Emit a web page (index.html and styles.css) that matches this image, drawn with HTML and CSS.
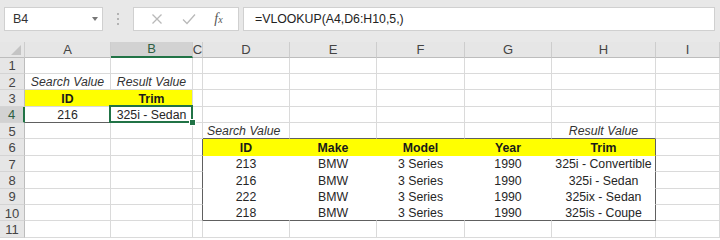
FILE: index.html
```html
<!DOCTYPE html>
<html lang="en">
<head>
  <meta charset="UTF-8">
  <title>VLOOKUP example</title>
  <link rel="stylesheet" href="styles.css">
</head>
<body>
  <div class="toolbar">
    <div class="name-box">
      <span>B4</span>
      <span class="name-arrow"></span>
    </div>
    <div class="grip"><i></i><i></i><i></i></div>
    <div class="fx-box">
      <svg class="tool-icon" width="12" height="12" viewBox="0 0 12 12">
        <path d="M1.5 1.5 L10.5 10.5 M10.5 1.5 L1.5 10.5" stroke="#b9b9b9" stroke-width="1.3" fill="none"/>
      </svg>
      <svg class="tool-icon" width="14" height="12" viewBox="0 0 14 12">
        <path d="M1 6.5 L5 10.5 L13 1.5" stroke="#b9b9b9" stroke-width="1.3" fill="none"/>
      </svg>
      <span class="fx"><i>f</i><i class="fx-x">x</i></span>
    </div>
    <div class="formula">=VLOOKUP(A4,D6:H10,5,)</div>
  </div>

  <div class="sheet">
    <!-- column headers -->
    <div class="ch corner"><span class="corner-mark"></span></div>
    <div class="ch">A</div>
    <div class="ch ch-sel">B</div>
    <div class="ch">C</div>
    <div class="ch">D</div>
    <div class="ch">E</div>
    <div class="ch">F</div>
    <div class="ch">G</div>
    <div class="ch">H</div>
    <div class="ch">I</div>

    <!-- row 1 -->
    <div class="rh">1</div>
    <div class="c"></div><div class="c"></div><div class="c"></div><div class="c"></div><div class="c"></div>
    <div class="c"></div><div class="c"></div><div class="c"></div><div class="c"></div>

    <!-- row 2 -->
    <div class="rh">2</div>
    <div class="c it">Search Value</div>
    <div class="c it">Result Value</div>
    <div class="c"></div><div class="c"></div><div class="c"></div>
    <div class="c"></div><div class="c"></div><div class="c"></div><div class="c"></div>

    <!-- row 3 -->
    <div class="rh">3</div>
    <div class="c y y-r">ID</div>
    <div class="c y">Trim</div>
    <div class="c"></div><div class="c"></div><div class="c"></div>
    <div class="c"></div><div class="c"></div><div class="c"></div><div class="c"></div>

    <!-- row 4 -->
    <div class="rh rh-sel">4</div>
    <div class="c edge-b">216</div>
    <div class="c active">325i - Sedan</div>
    <div class="c"></div><div class="c"></div><div class="c"></div>
    <div class="c"></div><div class="c"></div><div class="c"></div><div class="c"></div>

    <!-- row 5 -->
    <div class="rh">5</div>
    <div class="c"></div><div class="c"></div><div class="c"></div>
    <div class="c it left edge-b">Search Value</div>
    <div class="c edge-b"></div>
    <div class="c edge-b"></div>
    <div class="c edge-b"></div>
    <div class="c it edge-b">Result Value</div>
    <div class="c"></div>

    <!-- row 6 -->
    <div class="rh">6</div>
    <div class="c"></div><div class="c"></div>
    <div class="c edge-r"></div>
    <div class="c y y-r y-b">ID</div>
    <div class="c y y-r y-b">Make</div>
    <div class="c y y-r y-b">Model</div>
    <div class="c y y-r y-b">Year</div>
    <div class="c y y-b edge-r">Trim</div>
    <div class="c"></div>

    <!-- row 7 -->
    <div class="rh">7</div>
    <div class="c"></div><div class="c"></div>
    <div class="c edge-r"></div>
    <div class="c w">213</div>
    <div class="c w">BMW</div>
    <div class="c w">3 Series</div>
    <div class="c w">1990</div>
    <div class="c w edge-r">325i - Convertible</div>
    <div class="c"></div>

    <!-- row 8 -->
    <div class="rh">8</div>
    <div class="c"></div><div class="c"></div>
    <div class="c edge-r"></div>
    <div class="c w">216</div>
    <div class="c w">BMW</div>
    <div class="c w">3 Series</div>
    <div class="c w">1990</div>
    <div class="c w edge-r">325i - Sedan</div>
    <div class="c"></div>

    <!-- row 9 -->
    <div class="rh">9</div>
    <div class="c"></div><div class="c"></div>
    <div class="c edge-r"></div>
    <div class="c w">222</div>
    <div class="c w">BMW</div>
    <div class="c w">3 Series</div>
    <div class="c w">1990</div>
    <div class="c w edge-r">325ix - Sedan</div>
    <div class="c"></div>

    <!-- row 10 -->
    <div class="rh">10</div>
    <div class="c"></div><div class="c"></div>
    <div class="c edge-r"></div>
    <div class="c w edge-b">218</div>
    <div class="c w edge-b">BMW</div>
    <div class="c w edge-b">3 Series</div>
    <div class="c w edge-b">1990</div>
    <div class="c edge-b edge-r">325is - Coupe</div>
    <div class="c"></div>

    <!-- row 11 -->
    <div class="rh">11</div>
    <div class="c"></div><div class="c"></div><div class="c"></div><div class="c"></div><div class="c"></div>
    <div class="c"></div><div class="c"></div><div class="c"></div><div class="c"></div>
  </div>
</body>
</html>
```

FILE: styles.css
```css
body {
  margin: 0;
  width: 720px;
  height: 240px;
  overflow: hidden;
  background-color: #fff;
  font-family: 'Liberation Sans', Arial, sans-serif;
  color: #262626;
}

/* formula bar */
.toolbar {
  display: flex;
  align-items: flex-start;
  height: 41.5px;
  box-sizing: border-box;
  padding: 7px 5px 0 4px;
  background-color: #e8e8e8;
}
.name-box {
  display: flex;
  align-items: center;
  justify-content: space-between;
  width: 99px;
  height: 24px;
  box-sizing: border-box;
  padding: 0 4px 0 8px;
  background-color: #fff;
  border: 1px solid #d0d0d0;
  font-size: 12.5px;
  color: #333;
}
.name-arrow {
  width: 0;
  height: 0;
  border-left: 3.5px solid transparent;
  border-right: 3.5px solid transparent;
  border-top: 4px solid #777;
}
.grip {
  width: 30px;
  height: 24px;
  display: flex;
  flex-direction: column;
  align-items: center;
  justify-content: center;
  gap: 3px;
}
.grip i {
  width: 2px;
  height: 2px;
  background-color: #b3b3b3;
}
.fx-box {
  display: flex;
  align-items: center;
  justify-content: space-around;
  width: 106px;
  height: 24px;
  box-sizing: border-box;
  padding: 0 6px 0 8px;
  background-color: #fff;
  border: 1px solid #d0d0d0;
}
.fx {
  font-family: 'Liberation Serif', 'Times New Roman', serif;
  font-size: 14px;
  color: #555;
}
.fx-x {
  font-size: 10px;
}
.formula {
  flex: 1;
  height: 24px;
  margin-left: 4px;
  box-sizing: border-box;
  padding: 4px 11px 0;
  background-color: #fff;
  border: 1px solid #d0d0d0;
  font-size: 12.3px;
  color: #222;
}

/* grid */
.sheet {
  display: grid;
  grid-template-columns: 25px 86px 82px 10px 87px 87px 88px 87px 104px 1fr;
  grid-template-rows: 16px repeat(11, 16.4px);
}
.ch,
.rh {
  display: flex;
  align-items: center;
  justify-content: center;
  box-sizing: border-box;
  background-color: #e6e6e6;
  font-size: 13px;
  color: #444;
}
.ch {
  border-right: 1px solid #cdcdcd;
  border-bottom: 1px solid #bdbdbd;
}
.ch-sel {
  background-color: #d2d2d2;
  border-bottom: 2px solid #217346;
  color: #2f5f43;
}
.corner {
  position: relative;
}
.corner-mark {
  position: absolute;
  right: 3px;
  bottom: 2px;
  width: 0;
  height: 0;
  border-left: 10px solid transparent;
  border-bottom: 10px solid #c4c4c4;
}
.rh {
  padding-top: 1px;
  border-right: 1px solid #bdbdbd;
  border-bottom: 1px solid #d4d4d4;
}
.rh-sel {
  background-color: #d2d2d2;
  border-right: 2px solid #217346;
  color: #2f5f43;
}
.c {
  display: flex;
  align-items: flex-end;
  justify-content: center;
  box-sizing: border-box;
  border-right: 1px solid #dadada;
  border-bottom: 1px solid #dadada;
  font-size: 12.3px;
  line-height: 14px;
  white-space: nowrap;
}
.it {
  font-style: italic;
  color: #333;
}
.left {
  justify-content: flex-start;
  padding-left: 4px;
}
.y {
  background-color: #ffff00;
  font-weight: bold;
  color: #1a1a1a;
}
.y-r {
  border-right-color: #ffff00;
}
.y-b {
  border-bottom-color: #ffff00;
}
.w {
  border-right-color: #fff;
  border-bottom-color: #fff;
}
.edge-r {
  border-right-color: #606060;
}
.edge-b {
  border-bottom-color: #606060;
}

/* active cell */
.active {
  position: relative;
}
.active::after {
  content: "";
  position: absolute;
  left: -2px;
  top: -2px;
  right: -1px;
  bottom: -1px;
  border: 2px solid #217346;
}
.active::before {
  content: "";
  position: absolute;
  right: -4px;
  bottom: -4px;
  width: 5px;
  height: 5px;
  background-color: #217346;
  border: 1px solid #fff;
  z-index: 1;
}
```
